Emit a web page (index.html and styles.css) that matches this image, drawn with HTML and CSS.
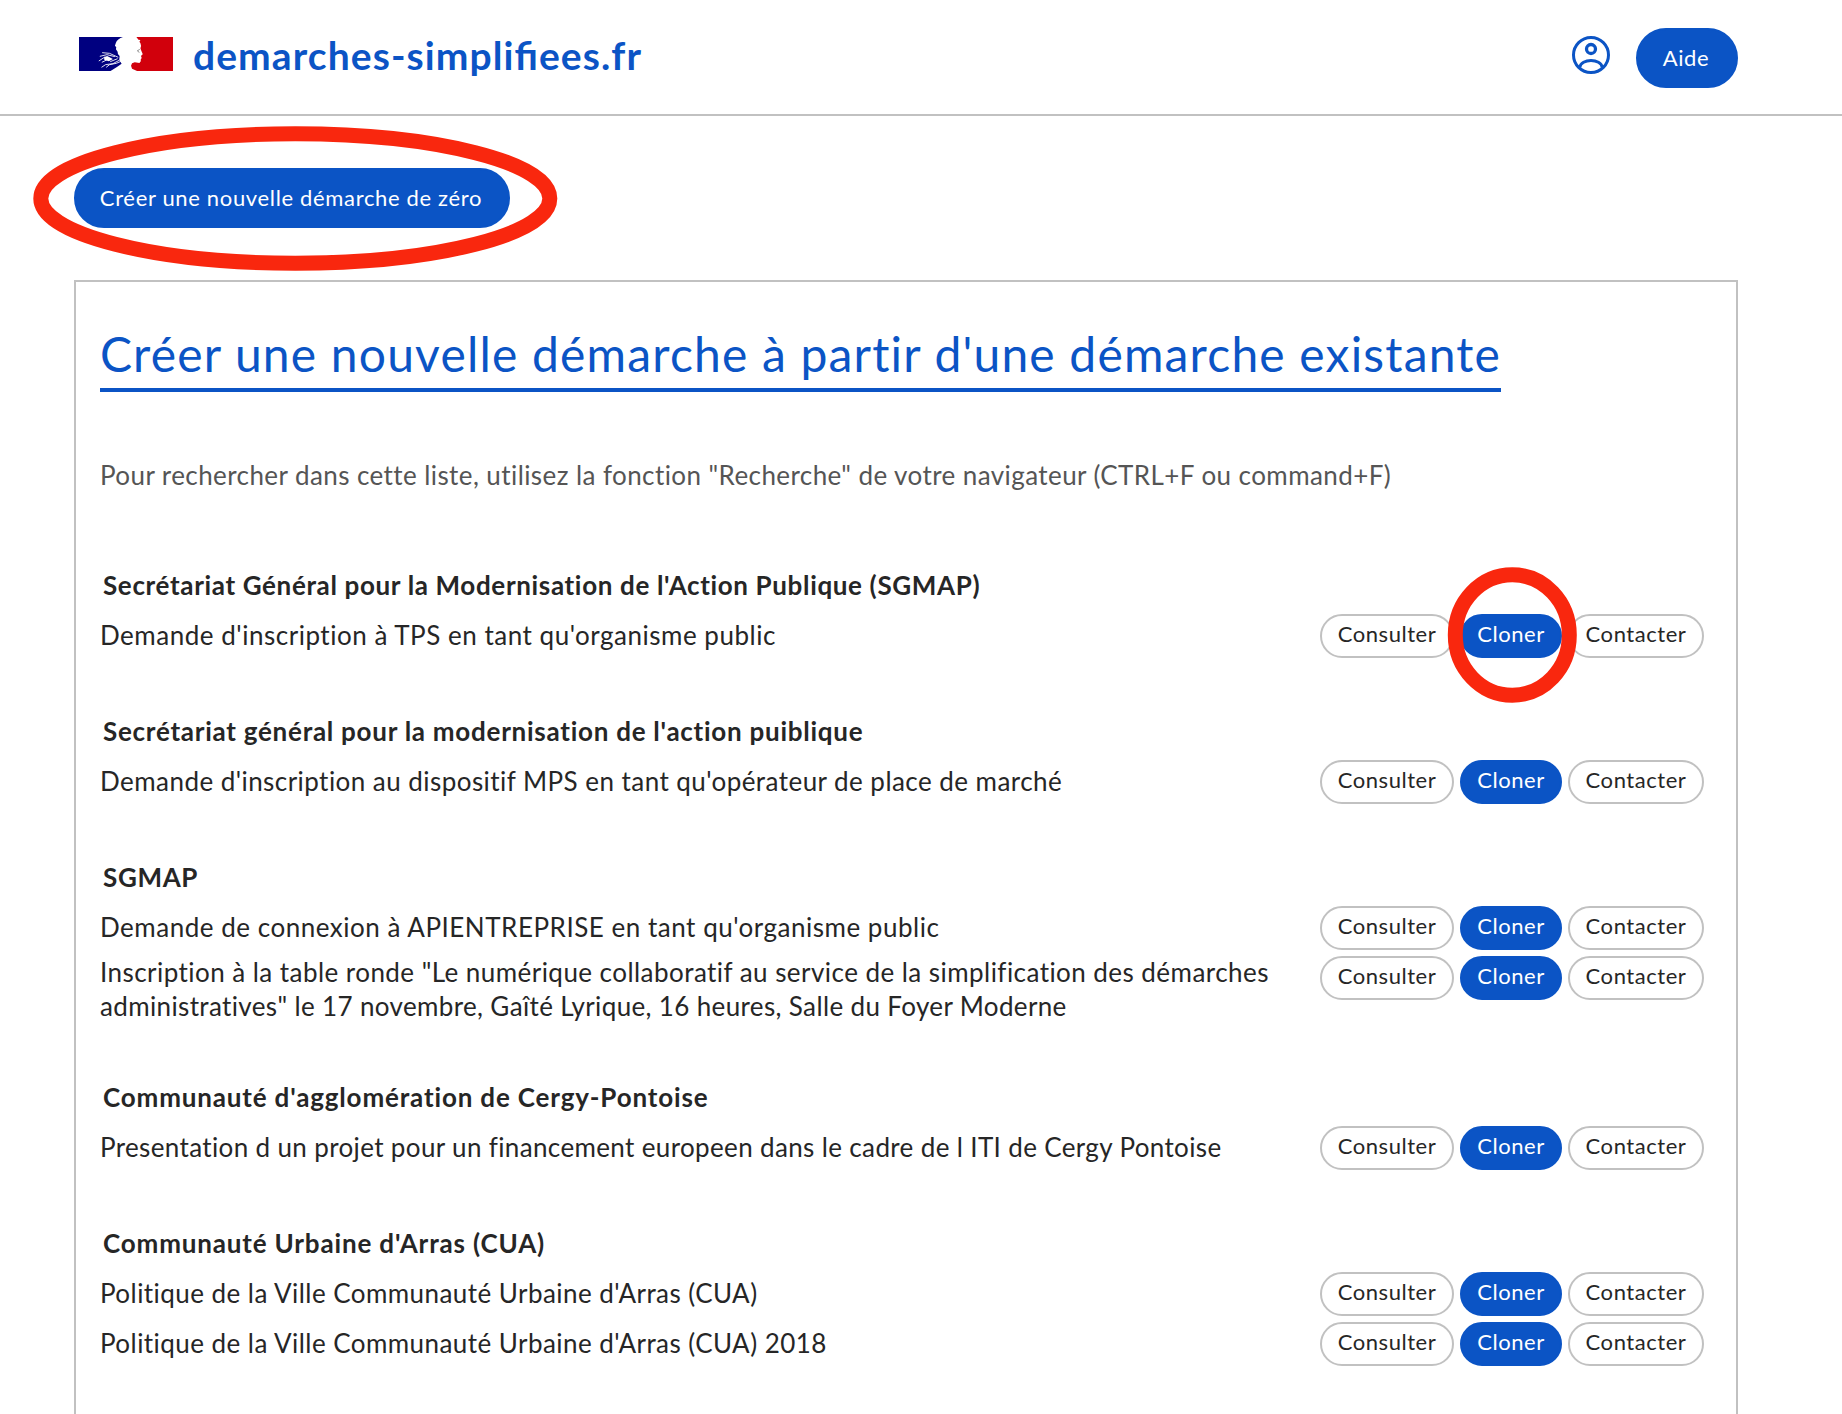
FILE: index.html
```
<!DOCTYPE html>
<html lang="fr">
<head>
<meta charset="utf-8">
<title>demarches-simplifiees.fr</title>
<link rel="stylesheet" href="styles.css">
</head>
<body>
<header class="header">
  <a class="brand">
    <svg class="brand-logo" viewBox="59 51 280 102" preserveAspectRatio="none" aria-hidden="true">
      <path fill="#000080" d="M59 51H190C179 55 171 61 169 68L166 77L170 82L169 88L174 95L175 102L180 108L179 118L184 128L186 131L172 141L153 153H59Z"/>
      <path fill="#d1000c" d="M230 51H339V153H232L217 146L214 137L217 130L225 127L239 129L243 124L243 118L246 114L244 110L245 106L249 103L244 91L242 85L244 78L242 70L239 65L242 60L236 59Z"/>
      <path fill="#fff" d="M134 111L143 108L160 117L148 124L134 119Z"/>
      <path fill="none" stroke="#fff" stroke-width="2.6" d="M128 98L150 100L176 112M121 109L142 104L166 110M118 123L136 111M127 127L143 119M126 142L138 134L160 131L182 119M140 142L150 134L170 130L184 124M152 125L174 116"/>
      <path fill="none" stroke="#555" stroke-width="2" d="M232 93L240 88M234 94L239 97"/>
    </svg>
    <span class="brand-name">demarches-simplifiees.fr</span>
  </a>
  <div class="header-actions">
    <svg class="account" viewBox="0 0 40 40" fill="none" stroke="#0b54c5" aria-hidden="true">
      <circle cx="20" cy="20" r="17.5" stroke-width="3"/>
      <circle cx="20" cy="14" r="4.5" stroke-width="3.3"/>
      <path stroke-width="3" d="M8.7 32.5C10 23.2 30 23.2 31.3 32.5"/>
    </svg>
    <a class="button primary help">Aide</a>
  </div>
</header>

<main class="main">
  <a class="button primary create">Créer une nouvelle démarche de zéro</a>

  <section class="card">
    <h1 class="card-title">Créer une nouvelle démarche à partir d'une démarche existante</h1>
    <p class="hint">Pour rechercher dans cette liste, utilisez la fonction "Recherche" de votre navigateur (CTRL+F ou command+F)</p>

    <div class="group">
      <h2 class="group-title snug">Secrétariat Général pour la Modernisation de l'Action Publique (SGMAP)</h2>
      <div class="row">
        <p class="label wide">Demande d'inscription à TPS en tant qu'organisme public</p>
        <div class="actions"><a class="button small">Consulter</a><a class="button small primary">Cloner</a><a class="button small">Contacter</a></div>
      </div>
    </div>

    <div class="group">
      <h2 class="group-title">Secrétariat général pour la modernisation de l'action puiblique</h2>
      <div class="row">
        <p class="label">Demande d'inscription au dispositif MPS en tant qu'opérateur de place de marché</p>
        <div class="actions"><a class="button small">Consulter</a><a class="button small primary">Cloner</a><a class="button small">Contacter</a></div>
      </div>
    </div>

    <div class="group">
      <h2 class="group-title snug">SGMAP</h2>
      <div class="row">
        <p class="label wide">Demande de connexion à APIENTREPRISE en tant qu'organisme public</p>
        <div class="actions"><a class="button small">Consulter</a><a class="button small primary">Cloner</a><a class="button small">Contacter</a></div>
      </div>
      <div class="row">
        <p class="label">Inscription à la table ronde "Le numérique collaboratif au service de la simplification des démarches<br><span class="snug">administratives" le 17 novembre, Gaîté Lyrique, 16 heures, Salle du Foyer Moderne</span></p>
        <div class="actions"><a class="button small">Consulter</a><a class="button small primary">Cloner</a><a class="button small">Contacter</a></div>
      </div>
    </div>

    <div class="group">
      <h2 class="group-title wide">Communauté d'agglomération de Cergy-Pontoise</h2>
      <div class="row">
        <p class="label snug">Presentation d un projet pour un financement europeen dans le cadre de l ITI de Cergy Pontoise</p>
        <div class="actions"><a class="button small">Consulter</a><a class="button small primary">Cloner</a><a class="button small">Contacter</a></div>
      </div>
    </div>

    <div class="group">
      <h2 class="group-title wide">Communauté Urbaine d'Arras (CUA)</h2>
      <div class="row">
        <p class="label">Politique de la Ville Communauté Urbaine d'Arras (CUA)</p>
        <div class="actions"><a class="button small">Consulter</a><a class="button small primary">Cloner</a><a class="button small">Contacter</a></div>
      </div>
      <div class="row">
        <p class="label">Politique de la Ville Communauté Urbaine d'Arras (CUA) 2018</p>
        <div class="actions"><a class="button small">Consulter</a><a class="button small primary">Cloner</a><a class="button small">Contacter</a></div>
      </div>
    </div>
  </section>
</main>

<!-- Hand-drawn style markers over the two ways to create a procedure -->
<svg class="markers" width="1842" height="1414" fill="none" stroke="#f9270e" stroke-width="15" aria-hidden="true">
  <ellipse cx="295.3" cy="198.5" rx="254.5" ry="64.7"/>
  <ellipse cx="1512.3" cy="635" rx="57" ry="60.2"/>
</svg>
</body>
</html>
```
FILE: styles.css
```
* { box-sizing: border-box; }

html { overflow: hidden; }

body {
  margin: 0;
  height: 1414px;
  overflow: hidden;
  position: relative;
  background: #fff;
  color: #262626;
  font: 26px/34px Lato, sans-serif;
}

h1, h2, p { margin: 0; }

.header {
  display: flex;
  justify-content: space-between;
  height: 116px;
  padding: 28px 104px 0 79px;
  border-bottom: 2px solid #c1c1c1;
}

.brand { display: flex; align-items: flex-start; gap: 20px; }
.brand-logo { width: 94px; height: 34px; margin-top: 9px; }
.brand-name {
  color: #0b54c5;
  font-size: 39px;
  font-weight: 700;
  line-height: 54px;
  letter-spacing: 1.08px;
  font-feature-settings: "liga" 1;
}

.header-actions { display: flex; align-items: flex-start; gap: 25px; }
.account { width: 40px; height: 40px; margin-top: 7px; }

.button {
  display: block;
  height: 60px;
  padding: 0 26px;
  border: 2px solid #c1c1c1;
  border-radius: 30px;
  color: #262626;
  font-size: 22px;
  line-height: 55px;
  letter-spacing: .55px;
  text-align: center;
  white-space: nowrap;
}
.button.primary { background: #0b54c5; border-color: #0b54c5; color: #fff; }
.button.small { height: 44px; padding: 0; border-radius: 22px; line-height: 35px; }
.button.help { width: 102px; padding: 0 2px 0 0; }
.button.create { width: 436px; padding: 0 2px 0 0; letter-spacing: .66px; }

.main { padding: 52px 104px 0 74px; }

.card {
  height: 1200px;
  margin-top: 52px;
  padding: 42px 32px 0 24px;
  border: 2px solid #c1c1c1;
}
.card-title {
  width: max-content;
  padding-bottom: 4px;
  border-bottom: 4px solid #0b54c5;
  color: #0b54c5;
  font-size: 48px;
  font-weight: 400;
  line-height: 60px;
  letter-spacing: 1.18px;
}
.hint { margin: 66px 0 75px; color: #555; letter-spacing: .42px; }

.group { margin-bottom: 52px; }
.group-title {
  margin: 0 0 9px 3px;
  padding-top: 1px;
  font-size: 26px;
  font-weight: 700;
  letter-spacing: .74px;
}
.group-title.snug { letter-spacing: .65px; }
.group-title.wide { letter-spacing: .84px; }

.row { display: flex; justify-content: space-between; min-height: 50px; }
.label { align-self: center; padding: 2px 0 4px; letter-spacing: .45px; white-space: nowrap; }
.label.wide { letter-spacing: .52px; }
.snug, .label.snug { letter-spacing: .36px; }

.actions {
  display: grid;
  grid-template-columns: 134px 102px 136px;
  gap: 6px;
  align-content: start;
  padding-top: 3px;
}

.markers { position: absolute; top: 0; left: 0; pointer-events: none; }
```
